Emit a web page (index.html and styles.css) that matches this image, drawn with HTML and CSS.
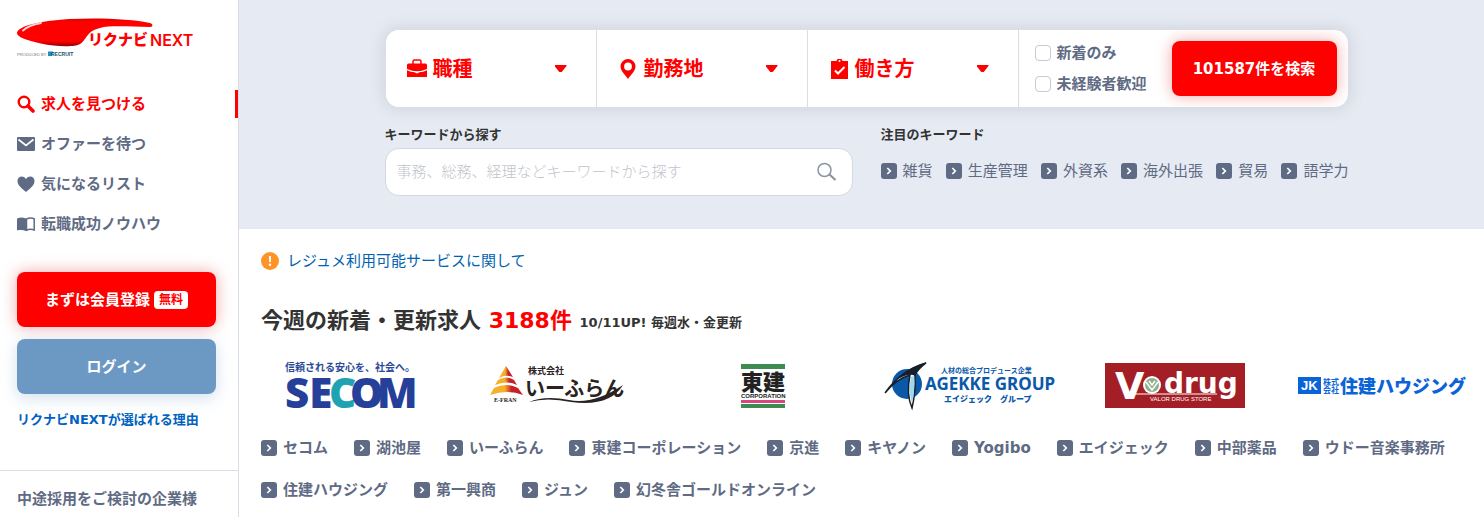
FILE: index.html
```html
<!DOCTYPE html>
<html lang="ja">
    <head>
        <meta charset="utf-8">
        <title>リクナビNEXT</title>
        <link rel="stylesheet" href="styles.css">
    </head>
    <body>
        <!-- shared icons -->
        <svg class="sprite" aria-hidden="true">
            <symbol id="chevron" viewBox="0 0 16 16">
                <rect width="16" height="16" rx="3" fill="#5f6b84"/>
                <path d="M6.3 5l3 3-3 3" fill="none" stroke="#fff" stroke-width="1.7"/>
            </symbol>
        </svg>

        <aside class="sidebar">
            <a class="logo" href="#" aria-label="リクナビNEXT">
                <svg width="182" height="44" viewBox="0 0 182 44">
                    <defs>
                        <linearGradient id="swoosh" x1="0" y1="0" x2="0" y2="1">
                            <stop offset="0" stop-color="#d80000"/>
                            <stop offset="0.12" stop-color="#ff0000"/>
                            <stop offset="0.82" stop-color="#ff0000"/>
                            <stop offset="1" stop-color="#940000"/>
                        </linearGradient>
                    </defs>
                    <path d="M0 15C1 8 22 3 52 1C82-.5 116 1 133 5C136.500 6 136 9 133 9C114 9 94 7 83 10C69 13 70 22 63 26C57 29.500 38 28.500 24 25.500C9 22 0 19 0 15z" fill="url(#swoosh)"/>
                    <path d="M6 12.500C10 8.500 16 6.500 24 5" fill="none" stroke="#ffd4d4" stroke-width="1.800" stroke-linecap="round"/>
                    <text class="logo-kana" x="71" y="27">リクナビ</text>
                    <text class="logo-next" x="133" y="28">NEXT</text>
                    <text class="logo-by" x="0" y="38">PRODUCED BY</text>
                    <path d="M31 33.500h5l-1 4.500h-4z" fill="#1592cc"/>
                    <text class="logo-recruit" x="34" y="38">RECRUIT</text>
                </svg>
            </a>
            <nav class="menu">
                <a class="active" href="#">
                    <svg width="18" height="18" viewBox="0 0 18 18" fill="none" stroke="currentColor"><circle cx="7" cy="7" r="5.300" stroke-width="2.400"/><path d="M11 11l5 5" stroke-width="3.600" stroke-linecap="round"/></svg>
                    求人を見つける
                </a>
                <a href="#">
                    <svg width="18" height="18" viewBox="0 0 18 18"><rect y="2" width="18" height="14" rx="1" fill="currentColor"/><path d="M1.500 4.500L9 10.500l7.500-6" fill="none" stroke="#fff" stroke-width="1.700"/></svg>
                    オファーを待つ
                </a>
                <a href="#">
                    <svg width="18" height="18" viewBox="0 0 18 18"><path d="M9 17C3 12 .5 9.500 .5 6C.5 1 6.500 0 9 4C11.500 0 17.500 1 17.500 6C17.500 9.500 15 12 9 17z" fill="currentColor"/></svg>
                    気になるリスト
                </a>
                <a href="#">
                    <svg width="18" height="18" viewBox="0 0 18 18"><path d="M0 3.500C3 2 6 2 9 3.500V16C6 14.800 3 14.800 0 15.500z" fill="currentColor"/><path d="M9.500 4C12 2.800 15 2.800 17.200 3.800V15C15 14.200 12 14.200 9.500 15.200z" fill="none" stroke="currentColor" stroke-width="1.500"/></svg>
                    転職成功ノウハウ
                </a>
            </nav>
            <div class="account">
                <button class="btn btn-red" type="button">まずは会員登録<span class="free">無料</span></button>
                <button class="btn btn-blue" type="button">ログイン</button>
                <a class="reason" href="#">リクナビNEXTが選ばれる理由</a>
            </div>
            <a class="company" href="#">中途採用をご検討の企業様</a>
        </aside>

        <main>
            <form class="search">
                <div class="search-inner">
                    <div class="conditions">
                        <button class="condition" type="button">
                            <svg width="20" height="20" viewBox="0 0 20 20" fill="currentColor"><path d="M6 5V2.500Q6 1 7.500 1h5Q14 1 14 2.500V5" fill="none" stroke="currentColor" stroke-width="1.500"/><path d="M1.500 4.500h17Q20 4.500 20 6V10q-5 2.200-10 2.200T0 10V6Q0 4.500 1.500 4.500z"/><path d="M0 11.300q4 2 7.500 2L10 14.500l2.500-1.200q3.500 0 7.500-2V18H0z"/></svg>
                            <span>職種</span><i class="arrow"></i>
                        </button>
                        <button class="condition" type="button">
                            <svg width="20" height="20" viewBox="0 0 20 20"><path d="M10 0a7.500 7.500 0 0 1 7.500 7.500C17.500 12 12.500 16 10 20C7.500 16 2.500 12 2.500 7.500A7.500 7.500 0 0 1 10 0zm0 3.600a3.900 3.900 0 1 0 0 7.800a3.900 3.900 0 1 0 0-7.800z" fill="currentColor"/></svg>
                            <span>勤務地</span><i class="arrow"></i>
                        </button>
                        <button class="condition" type="button">
                            <svg width="20" height="20" viewBox="0 0 20 20"><path d="M2 2h5.500Q8 -.5 10.500 -.5T13.500 2H19v18H2z" fill="currentColor"/><circle cx="10.500" cy="2" r="1" fill="#fff"/><path d="M6 11.500l3 3 6.500-6.500" fill="none" stroke="#fff" stroke-width="2"/></svg>
                            <span>働き方</span><i class="arrow"></i>
                        </button>
                        <div class="submit-area">
                            <div class="checks">
                                <label><input type="checkbox">新着のみ</label>
                                <label><input type="checkbox">未経験者歓迎</label>
                            </div>
                            <button class="btn btn-red btn-search" type="submit">101587件を検索</button>
                        </div>
                    </div>
                    <div class="keywords">
                        <div class="keyword-search">
                            <label class="caption" for="keyword">キーワードから探す</label>
                            <div class="keyword-box">
                                <input id="keyword" type="text" placeholder="事務、総務、経理などキーワードから探す">
                                <button class="icon-btn" type="submit" aria-label="検索">
                                    <svg width="20" height="20" viewBox="0 0 20 20" fill="none" stroke="#8b95a1"><circle cx="7.500" cy="8" r="6.500" stroke-width="1.500"/><path d="M12.500 12.500l6 5.500" stroke-width="2.200"/></svg>
                                </button>
                            </div>
                        </div>
                        <div class="hot">
                            <p class="caption">注目のキーワード</p>
                            <div class="hot-links">
                                <a href="#"><svg width="16" height="16"><use href="#chevron"/></svg>雑貨</a>
                                <a href="#"><svg width="16" height="16"><use href="#chevron"/></svg>生産管理</a>
                                <a href="#"><svg width="16" height="16"><use href="#chevron"/></svg>外資系</a>
                                <a href="#"><svg width="16" height="16"><use href="#chevron"/></svg>海外出張</a>
                                <a href="#"><svg width="16" height="16"><use href="#chevron"/></svg>貿易</a>
                                <a href="#"><svg width="16" height="16"><use href="#chevron"/></svg>語学力</a>
                            </div>
                        </div>
                    </div>
                </div>
            </form>

            <section class="content">
                <a class="notice" href="#">
                    <svg width="18" height="18" viewBox="0 0 18 18"><circle cx="9" cy="9" r="9" fill="#ff9326"/><path d="M9 4v6" stroke="#fff" stroke-width="2"/><circle cx="9" cy="12.700" r="1.200" fill="#fff"/></svg>
                    レジュメ利用可能サービスに関して
                </a>
                <h1>今週の新着・更新求人 <em>3188件</em> <small>10/11UP! 毎週水・金更新</small></h1>
            </section>

            <div class="logos">
                <a href="#" aria-label="セコム">
                    <svg width="140" height="50" viewBox="0 0 140 50">
                        <text class="secom-copy" x="4" y="10">信頼される安心を、社会へ。</text>
                        <g class="secom">
                            <text x="4" y="47">SE</text>
                            <text class="secom-c" x="48" y="47">C</text>
                            <text x="69" y="47">O</text>
                            <text x="96" y="47">M</text>
                        </g>
                    </svg>
                </a>
                <a href="#" aria-label="いーふらん">
                    <svg width="140" height="50" viewBox="0 0 140 50">
                        <defs>
                            <linearGradient id="efran">
                                <stop offset="0.450" stop-color="#f5b02a"/>
                                <stop offset="0.650" stop-color="#c8202a"/>
                            </linearGradient>
                        </defs>
                        <g fill="url(#efran)">
                            <path d="M19 5l7 11q-7-3-14 1z"/>
                            <path d="M11 19q8-5 16 0l3 5q-10-5-22 0z"/>
                            <path d="M7 27q12-6 24 0l5 7q-16-6-33 0z"/>
                        </g>
                        <text class="efran-en" x="7" y="41">E-FRAN</text>
                        <text class="efran-kk" x="41" y="13">株式会社</text>
                        <text class="efran-name" x="38" y="35">いーふらん</text>
                        <path d="M42 41Q58 34 82 39T136 24Q123 46 84 41Q60 36 42 41z" fill="#2b2222"/>
                    </svg>
                </a>
                <a href="#" aria-label="東建コーポレーション">
                    <svg width="140" height="50" viewBox="0 0 140 50">
                        <path d="M48 3h44v5H48zM48 43h44v4H48z" fill="#3f8c52"/>
                        <path d="M48 39h44v3H48z" fill="#d8467f"/>
                        <text class="token" x="48" y="29">東建</text>
                        <text class="token-en" x="48" y="37">CORPORATION</text>
                    </svg>
                </a>
                <a href="#" aria-label="エイジェック">
                    <svg width="170" height="50" viewBox="0 0 170 50">
                        <circle cx="23" cy="23" r="15" fill="#0a58a8"/>
                        <path d="M1 32Q17 9 42 2Q34 8 31 14Q32 30 28 47Q22 33 26 14Q12 18 1 32z" fill="#fff" stroke="#17202a" stroke-width="1.500"/>
                        <path d="M27 16l3-1q1 16-2 27q-4-12-1-26z" fill="#9cd8ee"/>
                        <path d="M12 19Q25 6 43 1Q33 8 31 15Q26 11 12 19z" fill="#17202a"/>
                        <text class="agekke-small" x="57" y="12">人材の総合プロデュース企業</text>
                        <text class="agekke" x="41" y="29">AGEKKE GROUP</text>
                        <text class="agekke-kana" x="60" y="41">エイジェック　グループ</text>
                    </svg>
                </a>
                <a href="#" aria-label="中部薬品">
                    <svg width="140" height="50" viewBox="0 0 140 50">
                        <rect y="2" width="140" height="45" fill="#a31e25"/>
                        <text class="vdrug-v" x="10" y="38">V</text>
                        <text class="vdrug" x="59" y="32">drug</text>
                        <path d="M30 33h82" stroke="#fff" stroke-width="1"/>
                        <circle cx="47" cy="24" r="9" fill="#fff"/>
                        <circle cx="47" cy="24" r="7" fill="#8fb08f"/>
                        <path d="M41 21l6 8 6-8M44 20l3 4 3-4" fill="none" stroke="#fff" stroke-width="1.500"/>
                        <text class="vdrug-small" x="45" y="40">VALOR DRUG STORE</text>
                    </svg>
                </a>
                <a href="#" aria-label="住建ハウジング">
                    <svg width="170" height="50" viewBox="0 0 170 50">
                        <rect x="2" y="16" width="23" height="17" fill="#0b63d8"/>
                        <text class="jk" x="5" y="29">JK</text>
                        <text class="jk-kk" x="27" y="24">株式</text>
                        <text class="jk-kk" x="27" y="32">会社</text>
                        <text class="jk-name" x="44" y="32">住建ハウジング</text>
                    </svg>
                </a>
            </div>

            <div class="companies">
                <a href="#"><svg width="16" height="16"><use href="#chevron"/></svg>セコム</a>
                <a href="#"><svg width="16" height="16"><use href="#chevron"/></svg>湖池屋</a>
                <a href="#"><svg width="16" height="16"><use href="#chevron"/></svg>いーふらん</a>
                <a href="#"><svg width="16" height="16"><use href="#chevron"/></svg>東建コーポレーション</a>
                <a href="#"><svg width="16" height="16"><use href="#chevron"/></svg>京進</a>
                <a href="#"><svg width="16" height="16"><use href="#chevron"/></svg>キヤノン</a>
                <a href="#"><svg width="16" height="16"><use href="#chevron"/></svg>Yogibo</a>
                <a href="#"><svg width="16" height="16"><use href="#chevron"/></svg>エイジェック</a>
                <a href="#"><svg width="16" height="16"><use href="#chevron"/></svg>中部薬品</a>
                <a href="#"><svg width="16" height="16"><use href="#chevron"/></svg>ウドー音楽事務所</a>
                <a href="#"><svg width="16" height="16"><use href="#chevron"/></svg>住建ハウジング</a>
                <a href="#"><svg width="16" height="16"><use href="#chevron"/></svg>第一興商</a>
                <a href="#"><svg width="16" height="16"><use href="#chevron"/></svg>ジュン</a>
                <a href="#"><svg width="16" height="16"><use href="#chevron"/></svg>幻冬舎ゴールドオンライン</a>
            </div>
        </main>
    </body>
</html>
```

FILE: styles.css
```css
*{
    box-sizing: border-box;
}
body{
    display: flex;
    min-height: 100vh;
    margin: 0;
    background-color: #fff;
    color: #333;
    font-family: "DejaVu Sans", "Noto Sans CJK JP", sans-serif;
    font-size: 15px;
    line-height: 24px;
}
a{
    color: inherit;
    text-decoration: none;
}
button, input{
    font: inherit;
}
button{
    border: none;
    padding: 0;
    cursor: pointer;
}
svg{
    flex: none;
    display: block;
}
.sprite{
    position: absolute;
    width: 0;
    height: 0;
}

/* sidebar */
.sidebar{
    flex: none;
    width: 239px;
    border-right: 1px solid #d9dde8;
    color: #5f6b84;
    font-weight: bold;
}
.logo{
    display: block;
    padding: 18px 17px 22px;
}
.logo-kana{
    font-size: 15px;
    font-weight: 900;
    fill: #f00;
}
.logo-next{
    font-family: Inter, sans-serif;
    font-size: 16px;
    font-weight: 600;
    fill: #f00;
}
.logo-by{
    font-family: "Liberation Sans", sans-serif;
    font-size: 4px;
    font-weight: normal;
    fill: #777;
}
.logo-recruit{
    font-family: "Liberation Sans", sans-serif;
    font-size: 5px;
    font-weight: bold;
    fill: #20506e;
}
.menu a{
    display: flex;
    align-items: center;
    gap: 6px;
    height: 40px;
    padding-left: 17px;
}
.menu .active{
    color: #f00;
    background: linear-gradient(#f00, #f00) right center / 3px 28px no-repeat;
}
.account{
    display: flex;
    flex-direction: column;
    gap: 12px;
    padding: 28px 22px 38px 17px;
}
.btn{
    display: flex;
    align-items: center;
    justify-content: center;
    height: 55px;
    border-radius: 8px;
    color: #fff;
    font-weight: bold;
}
.btn-red{
    background-color: #f00;
    box-shadow: 0 0 16px rgba(224, 0, 0, 0.35);
}
.btn-blue{
    background-color: #6b99c4;
    box-shadow: 0 4px 16px rgba(107, 153, 196, 0.3);
}
.free{
    margin-left: 4px;
    padding: 0 5px;
    border-radius: 4px;
    background-color: #fff;
    color: #f00;
    font-size: 12px;
    line-height: 18px;
}
.reason{
    margin-top: 2px;
    color: #0062c0;
    font-size: 13px;
}
.company{
    display: block;
    padding: 16px 17px;
    border-top: 1px solid #d9dde8;
}

/* search */
main{
    flex: 1;
    min-width: 0;
}
.search{
    padding: 29px 0 33px 10px;
    background-color: #e6eaf2;
}
.search-inner{
    max-width: 964px;
    margin: 0 auto;
}
.conditions{
    display: flex;
    overflow: hidden;
    height: 79px;
    border: 1px solid #d9dde8;
    border-radius: 14px;
    background-color: #fff;
    box-shadow: 0 0 16px rgba(95, 107, 132, 0.2);
}
.condition{
    flex: 1;
    display: flex;
    align-items: center;
    gap: 6px;
    padding: 0 29px 0 21px;
    border-right: 1px solid #d9dde8;
    background-color: #fff;
    color: #f00;
    font-size: 20px;
    font-weight: bold;
}
.arrow{
    width: 12px;
    height: 7px;
    margin-left: auto;
    background-color: #f00;
    clip-path: polygon(0 0, 100% 0, 100% 15%, 60% 100%, 40% 100%, 0 15%);
}
.submit-area{
    display: flex;
    align-items: center;
    justify-content: space-between;
    width: 329px;
    padding: 0 11px 0 16px;
}
.checks{
    display: flex;
    flex-direction: column;
    gap: 7px;
    color: #5f6b84;
    font-weight: bold;
}
.checks label{
    display: flex;
    align-items: center;
    gap: 6px;
}
.checks input{
    appearance: none;
    width: 16px;
    height: 16px;
    margin: 0;
    border: 1px solid #c5cad6;
    border-radius: 4px;
    background-color: #fff;
}
.btn-search{
    width: 165px;
}
.keywords{
    display: flex;
    gap: 28px;
    padding-top: 15px;
}
.keyword-search{
    flex: 1;
}
.caption{
    display: block;
    margin: 0 0 1px;
    color: #333;
    font-size: 13px;
    font-weight: bold;
}
.keyword-box{
    display: flex;
    align-items: center;
    height: 48px;
    padding: 0 15px 0 11px;
    border: 1px solid #d3d8e3;
    border-radius: 14px;
    background-color: #fff;
}
.keyword-box input{
    flex: 1;
    min-width: 0;
    padding: 0;
    border: none;
    outline: none;
    background: none;
}
.keyword-box input::placeholder{
    color: #bfc4cb;
    font-weight: 300;
}
.icon-btn{
    background: none;
}
.hot{
    width: 468px;
}
.hot-links{
    display: flex;
    justify-content: space-between;
    padding: 11px 0;
    color: #5f6b84;
}
.hot-links a, .companies a{
    display: flex;
    align-items: center;
    gap: 6px;
}

/* new jobs */
.content{
    padding: 20px 22px 0;
}
.notice{
    display: inline-flex;
    align-items: center;
    gap: 8px;
    color: #0062b1;
}
h1{
    margin: 28px 0 22px;
    font-size: 22px;
    line-height: 32px;
}
h1 em{
    color: #f00;
    font-style: normal;
}
h1 small{
    font-size: 13px;
    vertical-align: 1px;
}
.logos{
    display: grid;
    grid-template-columns: repeat(6, 1fr);
    justify-items: center;
    padding-left: 9px;
}
.logos svg{
    overflow: visible;
}
.companies{
    display: flex;
    flex-wrap: wrap;
    gap: 18px 26px;
    padding: 25px 16px 15px 22px;
    color: #5f6b84;
    font-weight: bold;
}

/* company logos */
.secom-copy{
    font-size: 10px;
    font-weight: bold;
    fill: #2b4a98;
}
.secom{
    font-family: "Noto Sans", sans-serif;
    font-size: 42px;
    font-weight: 900;
    fill: #26409a;
}
.secom-c{
    fill: #1fa3b3;
}
.efran-en{
    font-family: "Liberation Serif", serif;
    font-size: 6px;
    font-weight: bold;
    fill: #2b2222;
}
.efran-kk{
    font-size: 9px;
    font-weight: bold;
    fill: #2b2222;
}
.efran-name{
    font-size: 20px;
    font-weight: bold;
    fill: #2b2222;
}
.token{
    font-size: 22px;
    font-weight: 900;
    fill: #222;
}
.token-en{
    font-family: "Liberation Sans", sans-serif;
    font-size: 6px;
    font-weight: bold;
    fill: #222;
}
.agekke{
    font-family: "Noto Sans", sans-serif;
    font-size: 17px;
    font-weight: bold;
    fill: #0a58a8;
}
.agekke-small{
    font-size: 7px;
    font-weight: bold;
    fill: #0a58a8;
}
.agekke-kana{
    font-size: 8px;
    font-weight: 900;
    fill: #0a58a8;
}
.vdrug-v{
    font-family: "DejaVu Sans", sans-serif;
    font-size: 38px;
    font-weight: bold;
    fill: #fff;
}
.vdrug{
    font-family: "DejaVu Sans", sans-serif;
    font-size: 28px;
    font-weight: bold;
    fill: #fff;
}
.vdrug-small{
    font-family: "Liberation Sans", sans-serif;
    font-size: 6px;
    fill: #fff;
}
.jk{
    font-family: "Liberation Sans", sans-serif;
    font-size: 13px;
    font-weight: bold;
    fill: #fff;
}
.jk-kk{
    font-size: 8px;
    font-weight: bold;
    fill: #0b63d8;
}
.jk-name{
    font-size: 18px;
    font-weight: 900;
    fill: #0b63d8;
}
```
